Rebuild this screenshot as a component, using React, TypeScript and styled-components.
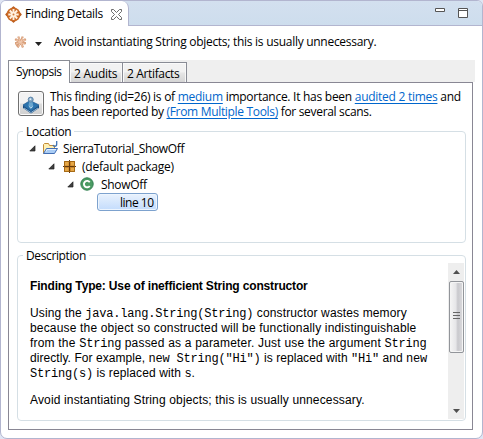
import React from 'react';
import styled, { createGlobalStyle } from 'styled-components';

const Global = createGlobalStyle`
  * { box-sizing: border-box; }
  html, body { margin: 0; padding: 0; overflow: hidden; background: #dfe5f3; }
  body { font: 12px/15px "Open Sans", "Noto Sans", sans-serif; color: #000; }
  svg { display: block; flex: none; }
`;

const View = styled.main`
  width: 483px;
  height: 439px;
  display: flex;
  flex-direction: column;
  border: 1px solid #b2b5cf;
  border-radius: 6px 6px 7px 7px;
  background: #fff;
  overflow: hidden;
`;
const TitleBar = styled.header`
  height: 25px;
  flex: none;
  display: flex;
  justify-content: space-between;
  background: linear-gradient(#d3e0ef, #cddded);
`;
const ViewTab = styled.div`
  width: 128px;
  display: flex;
  align-items: center;
  padding: 1px 0 0 4px;
  background: #fff;
  border-right: 1px solid #b2b5cf;
  border-top-right-radius: 7px;
`;
const ViewTitle = styled.span`
  width: 78px;
  margin: 0 8px 1px 3px;
`;
const WindowButtons = styled.div`
  flex: 1;
  display: flex;
  justify-content: flex-end;
  gap: 13px;
  padding: 7px 14px 0 0;
  border-bottom: 1px solid #b2b5cf;
`;
const Summary = styled.div`
  height: 34px;
  flex: none;
  display: flex;
  align-items: center;
  padding: 0 0 3px 13px;
`;
const SummaryText = styled.span`
  margin: 0 0 1px 12px;
`;
const DropArrow = styled.svg`
  margin: 4px 0 0 8px;
`;
const Run = styled.span<{ $s?: number }>`
  letter-spacing: ${(p) => p.$s ?? 0}px;
  white-space: pre;
`;
const Folder = styled.section`
  width: 467px;
  margin-left: 7px;
`;
const TabStrip = styled.nav`
  height: 22px;
  display: flex;
  align-items: flex-end;
  background: #efefef;
`;
const Tab = styled.div<{ $w: number; $active?: boolean }>`
  position: relative;
  width: ${(p) => p.$w}px;
  height: ${(p) => (p.$active ? 23 : 20)}px;
  margin-bottom: ${(p) => (p.$active ? -1 : 0)}px;
  padding: ${(p) => (p.$active ? '3px 0 0 7px' : '3px 0 0 4px')};
  border: 1px solid #898c95;
  border-left-width: ${(p) => (p.$active ? 1 : 0)}px;
  border-bottom: 0;
  background: ${(p) => (p.$active ? '#fff' : 'linear-gradient(#f2f2f2 0 45%, #e5e5e5 55%, #d5d5d5)')};
  box-shadow: ${(p) => (p.$active ? 'none' : 'inset 1px 1px #fafafa, inset -1px 0 #f8f8f8')};
  white-space: nowrap;
`;
const Panel = styled.div`
  width: 465px;
  height: 348px;
  padding: 8px 7px 0 8px;
  border: 1px solid #898794;
`;
const Finding = styled.div`
  display: flex;
  height: 40px;
  gap: 6px;
`;
const AuditButton = styled.button`
  width: 26px;
  height: 25px;
  margin: 0 0 0 1px;
  padding: 2px 0 0 3px;
  border: 1px solid #707070;
  border-radius: 3px;
  background: linear-gradient(#f2f2f2 0 48%, #dddddd 52%, #d0d0d0);
  box-shadow: inset 0 0 0 1px #fafafa;
`;
const FindingText = styled.div`
  margin: -2px -6px 0 0;
  line-height: 15px;
`;
const Line = styled.div`
  white-space: pre;
`;
const Link = styled.a`
  color: #0066cc;
  text-decoration: underline;
  text-underline-offset: 2px;
`;
const Group = styled.fieldset<{ $h: number; $gap: number }>`
  height: ${(p) => p.$h}px;
  min-width: 0;
  width: 449px;
  margin: ${(p) => p.$gap}px 0 0;
  padding: 0 0 0 4px;
  border: 1px solid #d5dfe5;
  border-radius: 4px;
`;
const Legend = styled.legend`
  height: 15px;
  margin-left: 1px;
  padding: 0 3px;
`;
const TreeRow = styled.div<{ $depth: number }>`
  height: 18px;
  display: flex;
  align-items: center;
  padding-left: ${(p) => p.$depth * 19 + 7}px;
`;
const Twisty = styled.svg`
  margin-right: 6px;
`;
const Label = styled.span<{ $gap: number }>`
  margin-left: ${(p) => p.$gap}px;
`;
const SelectedItem = styled.div`
  width: 61px;
  height: 18px;
  margin-left: 75px;
  padding: 1px 0 0 22px;
  border: 1px solid #7da2ce;
  border-radius: 3px;
  background: linear-gradient(#e9f2fd, #c3dcfc);
  box-shadow: inset 0 0 0 1px #edf5fe;
`;
const DescriptionBody = styled.div`
  display: flex;
  justify-content: space-between;
  height: 156px;
  padding-right: 1px;
`;
const Prose = styled.div`
  padding: 16px 0 0 8px;
  font: 12px/15px "Liberation Sans", Arial, sans-serif;
`;
const Para = styled.div`
  margin-bottom: 12px;
`;
const Heading = styled(Para)`
  font-weight: bold;
`;
const Code = styled.code`
  font: 12px/12px "Liberation Mono", "Courier New", monospace;
  letter-spacing: -0.2px;
`;
const Scrollbar = styled.div`
  width: 16px;
  display: flex;
  flex: none;
  flex-direction: column;
  align-items: center;
  justify-content: space-between;
  padding-bottom: 6px;
  background: #eeeeee;
`;
const ScrollTop = styled.div`
  display: flex;
  flex-direction: column;
  align-items: center;
  padding-top: 7px;
  gap: 7px;
`;
const Thumb = styled.div`
  width: 15px;
  height: 72px;
  padding: 30px 0 0 3px;
  border: 1px solid #92959a;
  border-radius: 2px;
  background: linear-gradient(90deg, #f5f5f5, #e6e6e8 45%, #c9c9cd 60%, #dcdcdf);
  box-shadow: inset 0 0 0 1px #f4f4f4;
`;

const SierraIcon = () => (
  <svg width="17" height="17" viewBox="0 0 17 17">
    <path d="M8.5 1 16 8.5 8.5 16 1 8.5Z" fill="#c66520" stroke="#b4581b" strokeWidth="1.4" strokeLinejoin="round" />
    <circle cx="8.5" cy="8.5" r="6.9" fill="#cb6a25" />
    <path d="M8.5 3v11M3.3 8.5h10.4M4.8 4.5l7.4 8M12.2 4.5l-7.4 8" stroke="#fff0df" strokeWidth="1.9" />
    <circle cx="8.5" cy="8.5" r="1" fill="#d37a37" />
  </svg>
);
const AsteriskIcon = () => (
  <svg width="13" height="14" viewBox="0 0 13 14">
    <path d="M4.3 1.5 6 6.5M8.7 1.5 7 6.5M1.2 4l4 3M11.8 4l-4 3M1 8.2h11M6 8l-2.3 4.5M7 8l2 4.5M2 10.5l4-3" stroke="#d9a17d" strokeWidth="2.2" />
    <path d="m4.5 2.5 4 9M9 2.5l-4.5 9M2 5l9 4.5M2 9l9-4" stroke="#f0c7ac" strokeWidth="1" />
  </svg>
);
const CloseIcon = () => (
  <svg width="11" height="11" viewBox="0 0 11 11">
    <path d="M.5.5h2l3 3 3-3h2v2l-3 3 3 3v2h-2l-3-3-3 3h-2v-2l3-3-3-3Z" fill="#fff" stroke="#5b5b5b" strokeWidth=".9" />
  </svg>
);
const MinimizeIcon = () => (
  <svg width="10" height="5" viewBox="0 0 10 5">
    <path d="M.5.5h9v3h-9Z" fill="#fff" stroke="#555" />
  </svg>
);
const MaximizeIcon = () => (
  <svg width="10" height="11" viewBox="0 0 10 11">
    <path d="M.5.5h9v9h-9ZM.5 2.5h9" fill="#fff" stroke="#555" />
  </svg>
);
const AuditIcon = () => (
  <svg width="18" height="18" viewBox="0 0 18 18">
    <path d="m1 9 8 6 8-6v3l-8 5.5L1 12Z" fill="#174f85" />
    <path d="m2 12 7 4.5 7-4.5" fill="none" stroke="#c7dff0" strokeWidth=".7" />
    <path d="M1 9 8 4.5 17 9l-8 6.2Z" fill="#2c74ae" stroke="#205a92" strokeWidth=".7" />
    <path d="M7.3 5h3l1 5-2.5 2L6.4 10Z" fill="#6aa6cf" />
    <circle cx="8.7" cy="3.6" r="2.5" fill="#84a9c6" stroke="#5d85aa" />
    <circle cx="8.4" cy="3.2" r=".9" fill="#dfedf7" />
    <path d="m7.2 10.6 1.7 1.6 1.8-1.6" fill="none" stroke="#d0e9f7" />
  </svg>
);
const ProjectIcon = () => (
  <svg width="17" height="16" viewBox="0 0 17 16">
    <path d="M1.5 13.5v-9l1-1h4l1 2h5v3" fill="#fff0b3" stroke="#c38c38" />
    <path d="m1.5 13.5 3-5h11l-3 5Z" fill="#a9ccf4" stroke="#426eb4" />
    <path d="m4 11.5 1-2h9" fill="none" stroke="#e2f0ff" />
    <path d="M14.7 1v3.3q0 2-2 2-1.3 0-1.7-1.3" fill="none" stroke="#3f73b5" strokeWidth="1.3" />
  </svg>
);
const PackageIcon = () => (
  <svg width="15" height="13" viewBox="-2 0 15 13">
    <path d="M1 1h11v11H1Z" fill="#c98429" />
    <path d="M2 2h3.5v3.5H2ZM8 2h3.5v3.5H8ZM2 8h3.5v3.5H2ZM8 8h3.5v3.5H8Z" fill="#e5a746" />
    <path d="M6.5 0v13M0 6.5h13" stroke="#64390c" />
    <path d="M1.5 1.5h10v10h-10Z" fill="none" stroke="#99600f" strokeWidth=".8" />
  </svg>
);
const ClassIcon = () => (
  <svg width="14" height="14" viewBox="0 0 14 14">
    <circle cx="7" cy="7" r="6.2" fill="#4b9b63" stroke="#348052" />
    <path d="M9.7 5.2A3.2 3.2 0 1 0 9.7 9" fill="none" stroke="#fff" strokeWidth="1.9" />
  </svg>
);
const Expanded = () => (
  <Twisty width="7" height="7" viewBox="0 0 7 7">
    <path d="M6 .8V6H.8Z" fill="#404040" stroke="#202020" strokeWidth=".7" />
  </Twisty>
);

export default function App() {
  return (
    <>
      <Global />
      <View>
        <TitleBar>
          <ViewTab>
            <SierraIcon />
            <ViewTitle><Run $s={-0.27}>Finding Details</Run></ViewTitle>
            <CloseIcon />
          </ViewTab>
          <WindowButtons><MinimizeIcon /><MaximizeIcon /></WindowButtons>
        </TitleBar>
        <Summary>
          <AsteriskIcon />
          <DropArrow width="7" height="4" viewBox="0 0 7 4"><path d="M0 0h7L3.5 4Z" fill="#222" /></DropArrow>
          <SummaryText><Run $s={-0.28}>Avoid instantiating String objects; this is usually unnecessary.</Run></SummaryText>
        </Summary>
        <Folder>
          <TabStrip>
            <Tab $w={62} $active><Run $s={-0.42}>Synopsis</Run></Tab>
            <Tab $w={53}><Run $s={-0.25}>2 Audits</Run></Tab>
            <Tab $w={64}><Run $s={-0.35}>2 Artifacts</Run></Tab>
          </TabStrip>
          <Panel>
            <Finding>
              <AuditButton aria-label="Audit finding"><AuditIcon /></AuditButton>
              <FindingText>
                <Line><Run $s={-0.27}>This finding (id=26) is of <Link>medium</Link> importance. It has been <Link>audited 2 times</Link> and</Run></Line>
                <Line><Run $s={-0.32}>has been reported by <Link>(From Multiple Tools)</Link> for several scans.</Run></Line>
              </FindingText>
            </Finding>
            <Group $h={119} $gap={-7}>
              <Legend><Run $s={-0.3}>Location</Run></Legend>
              <TreeRow $depth={0}><Expanded /><ProjectIcon /><Label $gap={4}><Run $s={-0.36}>SierraTutorial_ShowOff</Run></Label></TreeRow>
              <TreeRow $depth={1}><Expanded /><PackageIcon /><Label $gap={6}><Run $s={-0.22}>(default package)</Run></Label></TreeRow>
              <TreeRow $depth={2}><Expanded /><ClassIcon /><Label $gap={7}><Run $s={-0.3}>ShowOff</Run></Label></TreeRow>
              <SelectedItem><Run $s={-0.5}>line 10</Run></SelectedItem>
            </Group>
            <Group $h={173} $gap={5}>
              <Legend><Run $s={-0.38}>Description</Run></Legend>
              <DescriptionBody>
                <Prose>
                  <Heading><Run $s={-0.16}>Finding Type: Use of inefficient String constructor</Run></Heading>
                  <Para>
                    <Line><Run $s={0.13}>Using the <Code>java.lang.String(String)</Code> constructor wastes memory</Run></Line>
                    <Line><Run $s={0.17}>because the object so constructed will be functionally indistinguishable</Run></Line>
                    <Line><Run $s={0.2}>from the <Code>String</Code> passed as a parameter. Just use the argument <Code>String</Code></Run></Line>
                    <Line><Run $s={0.06}>directly. For example, <Code>new String("Hi")</Code> is replaced with <Code>"Hi"</Code> and <Code>new</Code></Run></Line>
                    <Line><Run $s={0.12}><Code>String(s)</Code> is replaced with <Code>s</Code>.</Run></Line>
                  </Para>
                  <Para><Run $s={0.15}>Avoid instantiating String objects; this is usually unnecessary.</Run></Para>
                </Prose>
                <Scrollbar>
                  <ScrollTop>
                    <svg width="7" height="4" viewBox="0 0 7 4"><path d="M0 4h7L3.5 0Z" fill="#505050" /></svg>
                    <Thumb><svg width="7" height="8" viewBox="0 0 7 8"><path d="M0 .5h7M0 3.5h7M0 6.5h7" stroke="#666" /></svg></Thumb>
                  </ScrollTop>
                  <svg width="7" height="4" viewBox="0 0 7 4"><path d="M0 0h7L3.5 4Z" fill="#505050" /></svg>
                </Scrollbar>
              </DescriptionBody>
            </Group>
          </Panel>
        </Folder>
      </View>
    </>
  );
}
